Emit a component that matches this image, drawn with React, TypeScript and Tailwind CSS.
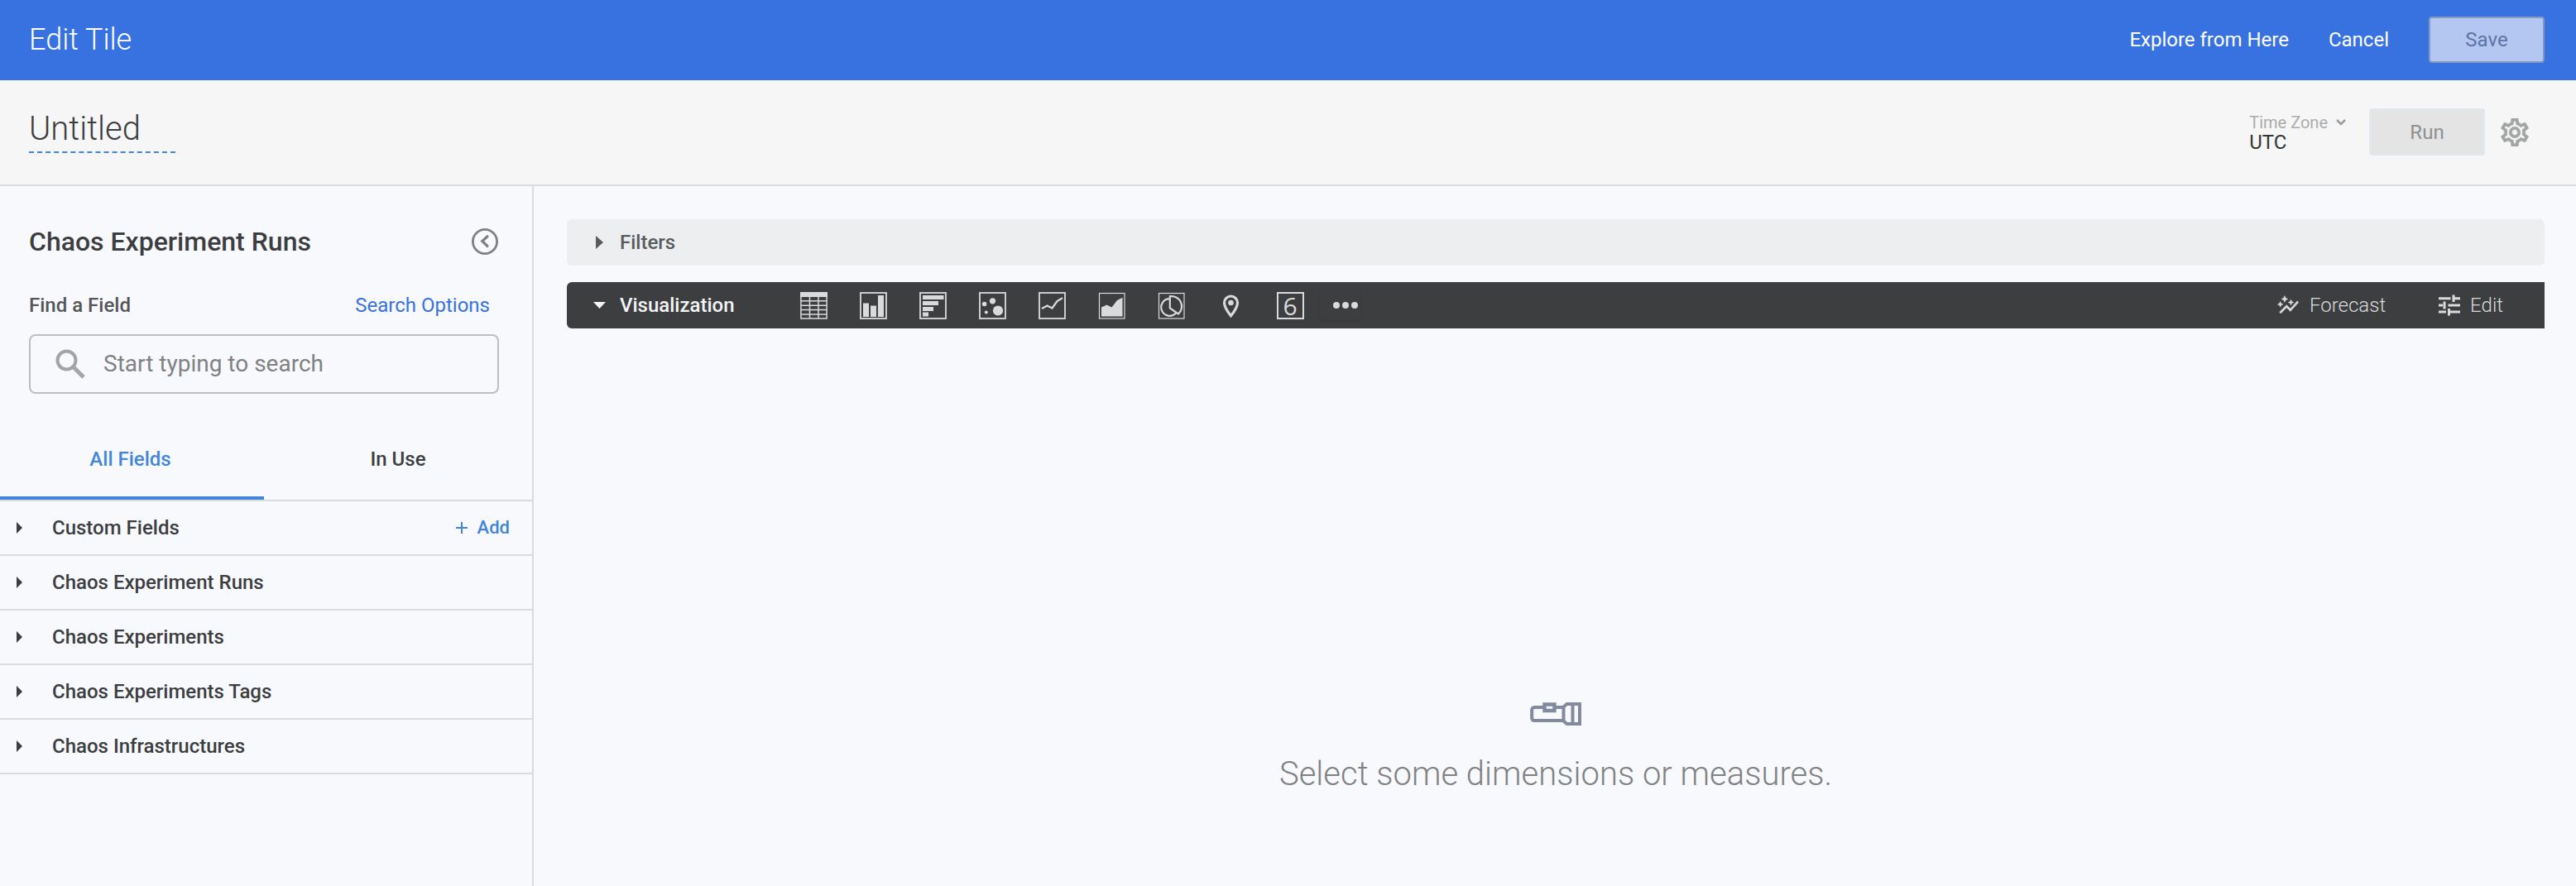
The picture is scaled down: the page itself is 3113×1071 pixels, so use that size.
import React, { useState } from "react";

const fieldGroups = [
  "Custom Fields",
  "Chaos Experiment Runs",
  "Chaos Experiments",
  "Chaos Experiments Tags",
  "Chaos Infrastructures",
];

function IconFrame({ children, thin = false }: { children?: React.ReactNode; thin?: boolean }) {
  return (
    <svg viewBox="0 0 33 33" className="size-[33px]" fill="currentColor" aria-hidden="true">
      <rect
        x={thin ? 1.5 : 1}
        y={thin ? 1.5 : 1}
        width={thin ? 30.5 : 31}
        height={thin ? 30.5 : 31}
        fill="none"
        stroke="currentColor"
        strokeWidth={thin ? 1.2 : 1.8}
      />
      {children}
    </svg>
  );
}

const visualizations: { name: string; icon: React.ReactNode }[] = [
  {
    name: "Table",
    icon: (
      <svg viewBox="0 0 33 33" className="size-[33px]" fill="currentColor" aria-hidden="true">
        <rect width="33" height="6" />
        <path
          d="M.9 1v31h31.2V1M11.5 5v27M22 5v27M1 10.8h31M1 16.3h31M1 21.5h31M1 27h31M1 32h31"
          fill="none"
          stroke="currentColor"
          strokeWidth="1.5"
        />
      </svg>
    ),
  },
  {
    name: "Column",
    icon: (
      <IconFrame>
        <path d="M4 13.5h7V30H4zM13 16.5h7V30h-7zM22 4h7v26h-7z" />
      </IconFrame>
    ),
  },
  {
    name: "Bar",
    icon: (
      <IconFrame>
        <path d="M4 4h25.5v5H4zM4 11h19v5H4zM4 18h13v5H4zM4 24.5h7v5H4z" />
      </IconFrame>
    ),
  },
  {
    name: "Scatterplot",
    icon: (
      <IconFrame>
        <circle cx="6.6" cy="14.5" r="2.8" />
        <circle cx="16.5" cy="10.8" r="3.6" />
        <circle cx="23" cy="22.5" r="6.1" />
        <circle cx="8.8" cy="24.5" r="2" />
      </IconFrame>
    ),
  },
  {
    name: "Line",
    icon: (
      <IconFrame>
        <path d="M4 20l6.5-3.5 6 3L22.500 11 29 7.200" fill="none" stroke="currentColor" strokeWidth="2.300" />
      </IconFrame>
    ),
  },
  {
    name: "Area",
    icon: (
      <IconFrame thin>
        <path d="M4 18.500l6.500-3 6 3 6.500-8.500 6.500-3.300V29.500H4z" />
      </IconFrame>
    ),
  },
  {
    name: "Pie",
    icon: (
      <IconFrame thin>
        <path
          d="M14.500 8.200A10.300 10.300 0 1 0 21.800 25.800M14.800 5.200A12.300 12.300 0 0 1 25 26.500L14.800 19.500z"
          fill="none"
          stroke="currentColor"
          strokeWidth="2.200"
        />
      </IconFrame>
    ),
  },
  {
    name: "Map",
    icon: (
      <svg viewBox="0 0 33 33" className="size-[33px]" aria-hidden="true">
        <path
          d="M16.500 28.700C11 22 8.500 18 8.500 13a8 8 0 0 1 16 0C24.500 18 22 22 16.500 28.700z"
          fill="none"
          stroke="currentColor"
          strokeWidth="3.200"
        />
        <circle cx="16.500" cy="13" r="3.300" fill="currentColor" />
      </svg>
    ),
  },
  {
    name: "Single Value",
    icon: (
      <span className="flex size-[33px] items-center justify-center border-2 border-current font-['Open_Sans',sans-serif] text-[30px] leading-[29px]">
        6
      </span>
    ),
  },
];

function ForecastIcon() {
  return (
    <svg viewBox="0 0 24 24" className="size-7" fill="currentColor" aria-hidden="true">
      <path
        stroke="currentColor"
        strokeWidth=".3"
        d="M14.060 9.940L12 9l2.060-.940L15 6l.940 2.060L18 9l-2.060.940L15 12l-.940-2.060zM4 14l.940-2.060L7 11l-2.060-.940L4 8l-.940 2.060L1 11l2.060.940L4 14zm4.500-5l1.090-2.410L12 5.500 9.590 4.410 8.500 2 7.410 4.410 5 5.500l2.410 1.090L8.500 9zm-4 11.500l6-6.010 4 4L23 8.930l-1.410-1.410-7.090 7.970-4-4L3 19l1.500 1.500z"
      />
    </svg>
  );
}

function TuneIcon() {
  return (
    <svg viewBox="0 0 26 26" className="size-[26px]" fill="currentColor" aria-hidden="true">
      <path d="M0 3.300h14.500v3H0zM16.500.500h3v8.500h-3zM19.500 3.300H26v3h-6.500zM0 11.500h5v3H0zM5.500 8.500h3v9h-3zM11.500 11.500H26v3H11.500zM0 19.500h9v3H0zM11 17h3v8.500h-3zM14 19.500h12v3H14z" />
    </svg>
  );
}

function GearIcon() {
  return (
    <svg viewBox="2 2 20 20" className="size-[34px]" fill="currentColor" aria-hidden="true">
      <path
        stroke="currentColor"
        strokeWidth=".3"
        d="M19.430 12.980c.040-.320.070-.640.070-.980s-.030-.660-.070-.980l2.110-1.650c.190-.150.240-.420.120-.640l-2-3.460a.5.5 0 0 0-.610-.220l-2.490 1a7.300 7.300 0 0 0-1.690-.980l-.380-2.650A.49.49 0 0 0 14 2h-4a.49.49 0 0 0-.490.420l-.380 2.650c-.610.250-1.170.590-1.690.980l-2.490-1a.5.5 0 0 0-.610.220l-2 3.460c-.130.220-.070.490.120.640l2.110 1.650c-.040.320-.070.650-.070.980s.030.660.070.980l-2.110 1.650c-.190.150-.240.420-.120.640l2 3.460c.120.220.390.290.610.220l2.490-1c.520.400 1.080.730 1.690.980l.380 2.650c.030.240.240.420.490.420h4c.250 0 .460-.180.490-.420l.380-2.650a7.700 7.700 0 0 0 1.690-.980l2.490 1c.230.090.490 0 .610-.220l2-3.460a.5.5 0 0 0-.120-.640l-2.110-1.650zm-1.980-1.710c.040.310.050.520.050.730s-.020.430-.050.730l-.140 1.130.89.700 1.080.84-.7 1.210-1.270-.510-1.040-.420-.9.680c-.430.320-.840.560-1.250.730l-1.060.430-.16 1.130-.2 1.350h-1.400l-.190-1.350-.160-1.130-1.060-.430c-.430-.180-.830-.410-1.230-.710l-.910-.7-1.060.430-1.270.510-.7-1.210 1.080-.84.890-.7-.140-1.130c-.030-.310-.050-.540-.050-.740s.020-.430.050-.730l.140-1.130-.89-.7-1.080-.84.700-1.210 1.270.510 1.040.420.900-.68c.430-.320.840-.56 1.250-.73l1.060-.43.160-1.130.2-1.350h1.390l.190 1.350.160 1.130 1.060.430c.430.180.830.410 1.230.710l.910.700 1.060-.43 1.270-.51.700 1.210-1.070.850-.89.700.140 1.130zM12 8a4 4 0 1 0 0 8 4 4 0 0 0 0-8zm0 6a2 2 0 1 1 0-4 2 2 0 0 1 0 4z"
      />
    </svg>
  );
}

function Flashlight() {
  return (
    <svg viewBox="0 0 62 28" className="h-7 w-[62px] text-[#828aa0]" fill="none" stroke="currentColor" aria-hidden="true">
      <path d="M16 6H5.500Q2.200 6 2.200 9.500v9.500Q2.200 22 5.500 22H39M31 6h8" strokeWidth="4" />
      <path d="M17.500 2.500h12v7.500h-12z" strokeWidth="4.400" />
      <path d="M40.500 5.500L44.500 2H60v24H44.500L40.500 22.500z" strokeWidth="4" />
      <path d="M51.500 2v24" strokeWidth="4" />
    </svg>
  );
}

function RightArrow() {
  return (
    <svg viewBox="0 0 7 14" className="h-3.5 w-[7px]" fill="currentColor" aria-hidden="true">
      <path d="M0 0l7 7-7 7z" />
    </svg>
  );
}

export default function App() {
  const [search, setSearch] = useState("");
  return (
    <div className="flex min-h-screen flex-col bg-[#f8f9fc] font-[Roboto,sans-serif] text-2xl text-[#3c3d40]">
      <header className="flex h-[97px] items-center justify-between bg-[#3872e0] pr-[38px] pb-px pl-[35px] text-white">
        <h1 className="text-4xl font-light">Edit Tile</h1>
        <div className="flex items-center">
          <a href="#explore" className="mr-12">Explore from Here</a>
          <button type="button" className="mr-12">Cancel</button>
          <button
            type="button"
            disabled
            className="h-14 w-[140px] rounded border-2 border-[#8298c5] bg-[#b3c7f1] text-[#5c73a6]"
          >
            Save
          </button>
        </div>
      </header>

      <div className="flex h-32 items-center justify-between border-b-2 border-[#dadbdd] bg-[#f6f6f6] pr-[57px] pb-px pl-[35px]">
        <h2 className="mb-0.5 w-[177px] border-b-2 border-dashed border-[#4285dc] pb-[3px] text-[40px] leading-12 font-light">
          Untitled
        </h2>
        <div className="flex items-center">
          <button type="button" className="mr-7 text-left">
            <span className="flex items-center gap-2.5 text-xl leading-6 text-[#aaabac]">
              Time Zone
              <svg viewBox="0 0 12 8" className="h-2 w-3" fill="none" stroke="#9b9c9d" strokeWidth="2.5" aria-hidden="true">
                <path d="M1 1l5 5 5-5" />
              </svg>
            </span>
            <span className="block leading-6 text-[#333436]">UTC</span>
          </button>
          <button
            type="button"
            disabled
            className="mr-[19px] h-[57px] w-[140px] rounded border-2 border-[#dfe8f2] bg-[#e4e4e4] text-[#8f9091]"
          >
            Run
          </button>
          <button type="button" aria-label="Settings" className="text-[#a3a4a5]">
            <GearIcon />
          </button>
        </div>
      </div>

      <div className="flex grow">
        <aside className="w-[645px] shrink-0 border-r-2 border-[#dadbdd]">
          <div className="flex items-center justify-between pt-[43px] pr-10 pl-[35px]">
            <h3 className="text-[32px] leading-12 font-medium">Chaos Experiment Runs</h3>
            <button type="button" aria-label="Collapse field picker" className="text-[#808183]">
              <svg viewBox="0 0 34 34" className="size-[34px]" fill="none" stroke="currentColor" strokeWidth="2.800" aria-hidden="true">
                <circle cx="17" cy="17" r="14.600" />
                <path d="M20 10.800L13.800 16.500l6.200 6" strokeWidth="3.200" strokeLinecap="round" />
              </svg>
            </button>
          </div>
          <div className="mt-[37px] flex items-center justify-between pr-[51px] pl-[35px] leading-8">
            <label htmlFor="field-search" className="font-medium text-[#55565a]">Find a Field</label>
            <a href="#search-options" className="text-[#3872e0]">Search Options</a>
          </div>
          <div className="mt-[19px] mr-10 ml-[35px] flex h-[72px] items-center rounded-lg border-2 border-[#bcbdbf] pl-[30px]">
            <svg viewBox="0 0 36 36" className="size-9 shrink-0 text-[#a3a4a6]" fill="none" stroke="currentColor" strokeWidth="4" aria-hidden="true">
              <circle cx="13.500" cy="13.500" r="11" />
              <path d="M22 22l12 12" strokeWidth="5" />
            </svg>
            <input
              id="field-search"
              type="text"
              value={search}
              onChange={(event) => setSearch(event.target.value)}
              placeholder="Start typing to search"
              className="ml-[22px] min-w-0 grow bg-transparent text-[28px] outline-none placeholder:text-[#808183]"
            />
          </div>
          <div role="tablist" className="mt-7 flex h-[102px] border-b-2 border-[#dadbdd] font-medium">
            <button
              type="button"
              role="tab"
              aria-selected="true"
              className="w-[319px] border-b-4 border-[#4285dc] pt-1.5 pr-1 text-[#4285dc]"
            >
              All Fields
            </button>
            <button type="button" role="tab" aria-selected="false" className="grow border-b-4 border-transparent pt-1.5">
              In Use
            </button>
          </div>
          <ul className="font-medium">
            {fieldGroups.map((group, index) => (
              <li key={group} className="flex h-[66px] items-center justify-between border-b-2 border-[#dadbdd] pr-[27px] pl-5">
                <button type="button" aria-expanded="false" className="flex items-center gap-9">
                  <RightArrow />
                  {group}
                </button>
                {index === 0 && (
                  <button type="button" className="flex items-center gap-3 text-[22px] text-[#4285dc]">
                    <svg viewBox="0 0 14 14" className="size-3.5" fill="none" stroke="currentColor" strokeWidth="2" aria-hidden="true">
                      <path d="M7 0v14M0 7h14" />
                    </svg>
                    Add
                  </button>
                )}
              </li>
            ))}
          </ul>
        </aside>

        <main className="flex min-w-0 grow flex-col pt-10 pr-[38px] pl-10">
          <button
            type="button"
            aria-expanded="false"
            className="flex h-14 items-center gap-5 rounded-md bg-[#edeef0] pl-[35px] font-medium text-[#5a5b5d]"
          >
            <svg viewBox="0 0 9 16" className="h-4 w-[9px]" fill="currentColor" aria-hidden="true">
              <path d="M0 0l9 8-9 8z" />
            </svg>
            Filters
          </button>

          <section className="mt-5 flex h-14 items-center justify-between rounded-l-md bg-[#3d3e40] pr-[50px] pl-8 text-[#d9dadc]">
            <div className="flex items-center">
              <button type="button" aria-expanded="true" className="flex items-center gap-[17px] font-medium text-[#f3f4f5]">
                <svg viewBox="0 0 15 8" className="h-2 w-[15px]" fill="currentColor" aria-hidden="true">
                  <path d="M0 0h15L7.500 8z" />
                </svg>
                Visualization
              </button>
              <div className="ml-[79px] flex items-center gap-[39px]">
                {visualizations.map(({ name, icon }) => (
                  <button key={name} type="button" aria-label={name}>
                    {icon}
                  </button>
                ))}
              </div>
              <button
                type="button"
                aria-label="More visualizations"
                className="ml-5 flex h-9 w-12 items-center justify-end rounded pr-[3px] shadow-sm"
              >
                <svg viewBox="0 0 30 8" className="h-2 w-[30px]" fill="currentColor" aria-hidden="true">
                  <circle cx="4" cy="4" r="4" />
                  <circle cx="15" cy="4" r="4" />
                  <circle cx="26" cy="4" r="4" />
                </svg>
              </button>
            </div>
            <div className="flex items-center gap-16 font-light">
              <button type="button" className="flex items-center gap-3">
                <ForecastIcon />
                Forecast
              </button>
              <button type="button" className="flex items-center gap-3">
                <TuneIcon />
                Edit
              </button>
            </div>
          </section>

          <div className="flex flex-col items-center gap-[35px] pt-[452px] text-[#808183]">
            <Flashlight />
            <p className="text-[40px] leading-12 font-light">Select some dimensions or measures.</p>
          </div>
        </main>
      </div>
    </div>
  );
}
